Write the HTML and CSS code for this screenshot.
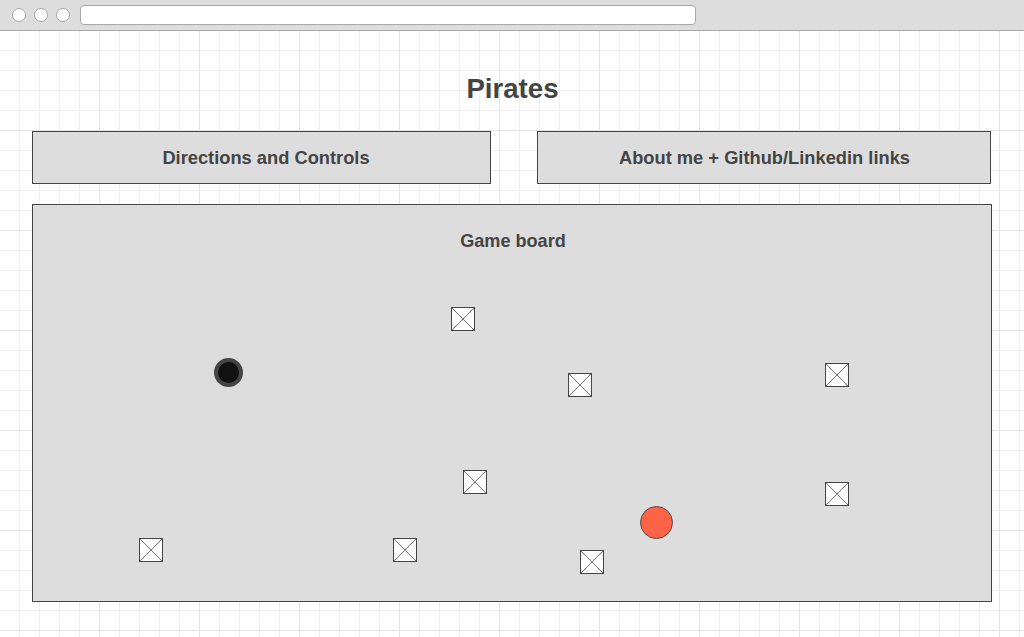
FILE: index.html
```html
<!DOCTYPE html>
<html lang="en">
<head>
<meta charset="utf-8">
<title>Pirates</title>
<link rel="stylesheet" href="styles.css">
</head>
<body>
<div class="chrome">
  <div class="dots">
    <span class="dot"></span><span class="dot"></span><span class="dot"></span>
  </div>
  <div class="address"></div>
</div>
<main class="page">
  <h1 class="title">Pirates</h1>
  <div class="nav">
    <div class="btn btn-left">Directions and Controls</div>
    <div class="btn btn-right">About me + Github/Linkedin links</div>
  </div>
  <section class="board">
    <h2 class="board-title">Game board</h2>
    <div class="ball ball-black" style="left:181px;top:153px"></div>
    <div class="ball ball-red" style="left:607px;top:301px"></div>
    <svg class="cross" style="left:418px;top:102px" viewBox="0 0 24 24"><rect x="0.5" y="0.5" width="23" height="23"/><path d="M1 1L23 23M23 1L1 23"/></svg>
    <svg class="cross" style="left:535px;top:168px" viewBox="0 0 24 24"><rect x="0.5" y="0.5" width="23" height="23"/><path d="M1 1L23 23M23 1L1 23"/></svg>
    <svg class="cross" style="left:792px;top:158px" viewBox="0 0 24 24"><rect x="0.5" y="0.5" width="23" height="23"/><path d="M1 1L23 23M23 1L1 23"/></svg>
    <svg class="cross" style="left:430px;top:265px" viewBox="0 0 24 24"><rect x="0.5" y="0.5" width="23" height="23"/><path d="M1 1L23 23M23 1L1 23"/></svg>
    <svg class="cross" style="left:792px;top:277px" viewBox="0 0 24 24"><rect x="0.5" y="0.5" width="23" height="23"/><path d="M1 1L23 23M23 1L1 23"/></svg>
    <svg class="cross" style="left:106px;top:333px" viewBox="0 0 24 24"><rect x="0.5" y="0.5" width="23" height="23"/><path d="M1 1L23 23M23 1L1 23"/></svg>
    <svg class="cross" style="left:360px;top:333px" viewBox="0 0 24 24"><rect x="0.5" y="0.5" width="23" height="23"/><path d="M1 1L23 23M23 1L1 23"/></svg>
    <svg class="cross" style="left:547px;top:345px" viewBox="0 0 24 24"><rect x="0.5" y="0.5" width="23" height="23"/><path d="M1 1L23 23M23 1L1 23"/></svg>
  </section>
</main>
</body>
</html>
```

FILE: styles.css
```css
* { box-sizing: border-box; }
html, body { margin: 0; padding: 0; }
body {
  width: 1024px;
  height: 637px;
  overflow: hidden;
  background: #ffffff;
  font-family: "Liberation Sans", Arial, sans-serif;
  color: #444444;
}
.chrome {
  height: 31px;
  background: #dddddd;
  border-bottom: 1px solid #a8a8a8;
  display: flex;
  align-items: flex-start;
}
.dots {
  display: flex;
  gap: 8px;
  padding: 8px 0 0 12px;
}
.dot {
  width: 14px;
  height: 14px;
  border-radius: 50%;
  background: #ffffff;
  border: 1px solid #a8a8a8;
}
.address {
  margin: 5px 0 0 10px;
  width: 616px;
  height: 20px;
  background: #ffffff;
  border: 1px solid #a8a8a8;
  border-radius: 4px;
}
.page {
  height: 606px;
  padding: 42px 0 0 32px;
  background-color: #ffffff;
  background-image:
    linear-gradient(to right, transparent 99px, #e3e3e3 99px),
    linear-gradient(to bottom, transparent 99px, #e3e3e3 99px),
    linear-gradient(to right, transparent 19px, #eeeeee 19px),
    linear-gradient(to bottom, transparent 19px, #eeeeee 19px);
  background-size: 100px 100px, 100px 100px, 20px 20px, 20px 20px;
}
.title {
  margin: 0;
  width: 961px;
  text-align: center;
  font-size: 27.6px;
  line-height: 32px;
  font-weight: bold;
  color: #444444;
}
.nav {
  display: flex;
  gap: 46px;
  margin-top: 26px;
}
.btn {
  height: 53px;
  background: #dddddd;
  border: 1px solid #444444;
  display: flex;
  align-items: center;
  justify-content: center;
  padding-top: 1px;
  font-size: 18.3px;
  font-weight: bold;
  color: #444444;
}
.btn-left { width: 459px; padding-left: 9px; }
.btn-right { width: 454px; padding-left: 1px; }
.board {
  position: relative;
  margin-top: 20px;
  width: 960px;
  height: 398px;
  background: #dddddd;
  border: 1px solid #444444;
  padding-top: 26px;
}
.board-title {
  margin: 0;
  padding-left: 2px;
  text-align: center;
  font-size: 18.1px;
  line-height: 20px;
  font-weight: bold;
  color: #444444;
}
.ball {
  position: absolute;
  border-radius: 50%;
}
.ball-black {
  width: 29px;
  height: 29px;
  background: #111111;
  border: 4px solid #444444;
}
.ball-red {
  width: 33px;
  height: 33px;
  background: #ff6347;
  border: 1px solid #4a4a4a;
}
.cross {
  position: absolute;
  width: 24px;
  height: 24px;
  display: block;
}
.cross rect {
  fill: #ffffff;
  stroke: #444444;
  stroke-width: 1;
}
.cross path {
  stroke: #777777;
  stroke-width: 1;
  fill: none;
}
```
